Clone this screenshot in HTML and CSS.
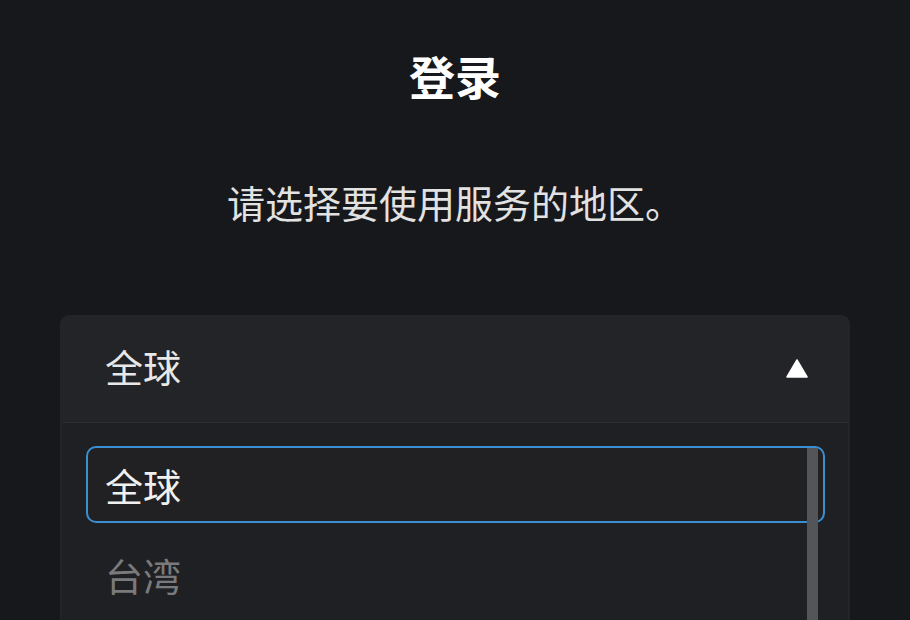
FILE: index.html
```html
<!DOCTYPE html>
<html lang="zh-CN">
<head>
<meta charset="utf-8">
<link rel="stylesheet" href="styles.css">
</head>
<body>
<div class="page">
  <h1 class="title">登录</h1>
  <p class="subtitle">请选择要使用服务的地区。</p>
  <div class="dropdown">
    <div class="dropdown-head">
      <span class="dropdown-value">全球</span>
      <svg class="arrow" width="22" height="19" viewBox="0 0 22 19"><path d="M11 1 L21 18 L1 18 Z" fill="#ffffff" stroke="#ffffff" stroke-width="1.5" stroke-linejoin="round"/></svg>
    </div>
    <div class="dropdown-list">
      <div class="option option-selected">全球</div>
      <div class="option option-muted">台湾</div>
      <div class="scrollbar"></div>
    </div>
  </div>
</div>
</body>
</html>
```
FILE: styles.css
```css
html, body {
  margin: 0;
  padding: 0;
  background: #17181b;
  height: 100%;
  overflow: hidden;
}
.page {
  font-family: "Noto Sans CJK SC", "Noto Sans", sans-serif;
  display: flex;
  flex-direction: column;
  align-items: stretch;
}
.title {
  margin: 52px 0 0;
  font-size: 46px;
  line-height: 46px;
  font-weight: 700;
  color: #ffffff;
  text-align: center;
}
.subtitle {
  margin: 85px 0 0;
  font-size: 38px;
  line-height: 38px;
  color: #e2e2e2;
  text-align: center;
}
.dropdown {
  margin: 94px 60px 0;
  background: #232427;
  border-radius: 9px 9px 0 0;
}
.dropdown-head {
  height: 107px;
  box-sizing: border-box;
  display: flex;
  align-items: center;
  justify-content: space-between;
  padding: 0 42px 6px 45px;
}
.dropdown-value {
  font-size: 38px;
  line-height: 38px;
  color: #e8e8e8;
}
.arrow {
  display: block;
  margin-top: 6px;
}
.dropdown-list {
  position: relative;
  margin: 0 2px;
  background: #1f2023;
  border-top: 1px solid #2e2f33;
  padding: 23px 23px 8px 24px;
  display: flex;
  flex-direction: column;
  gap: 13px;
}
.option {
  height: 77px;
  box-sizing: border-box;
  display: flex;
  align-items: center;
  padding-left: 19px;
  font-size: 38px;
  line-height: 38px;
}
.option-selected {
  border: 2px solid #3a8fd2;
  border-radius: 10px;
  padding-left: 17px;
  color: #f0f0f0;
  background: #212124;
}
.option-muted {
  color: #7a7a7c;
}
.scrollbar {
  position: absolute;
  left: 745px;
  top: 25px;
  bottom: 0;
  width: 11px;
  background: #545559;
}
```
